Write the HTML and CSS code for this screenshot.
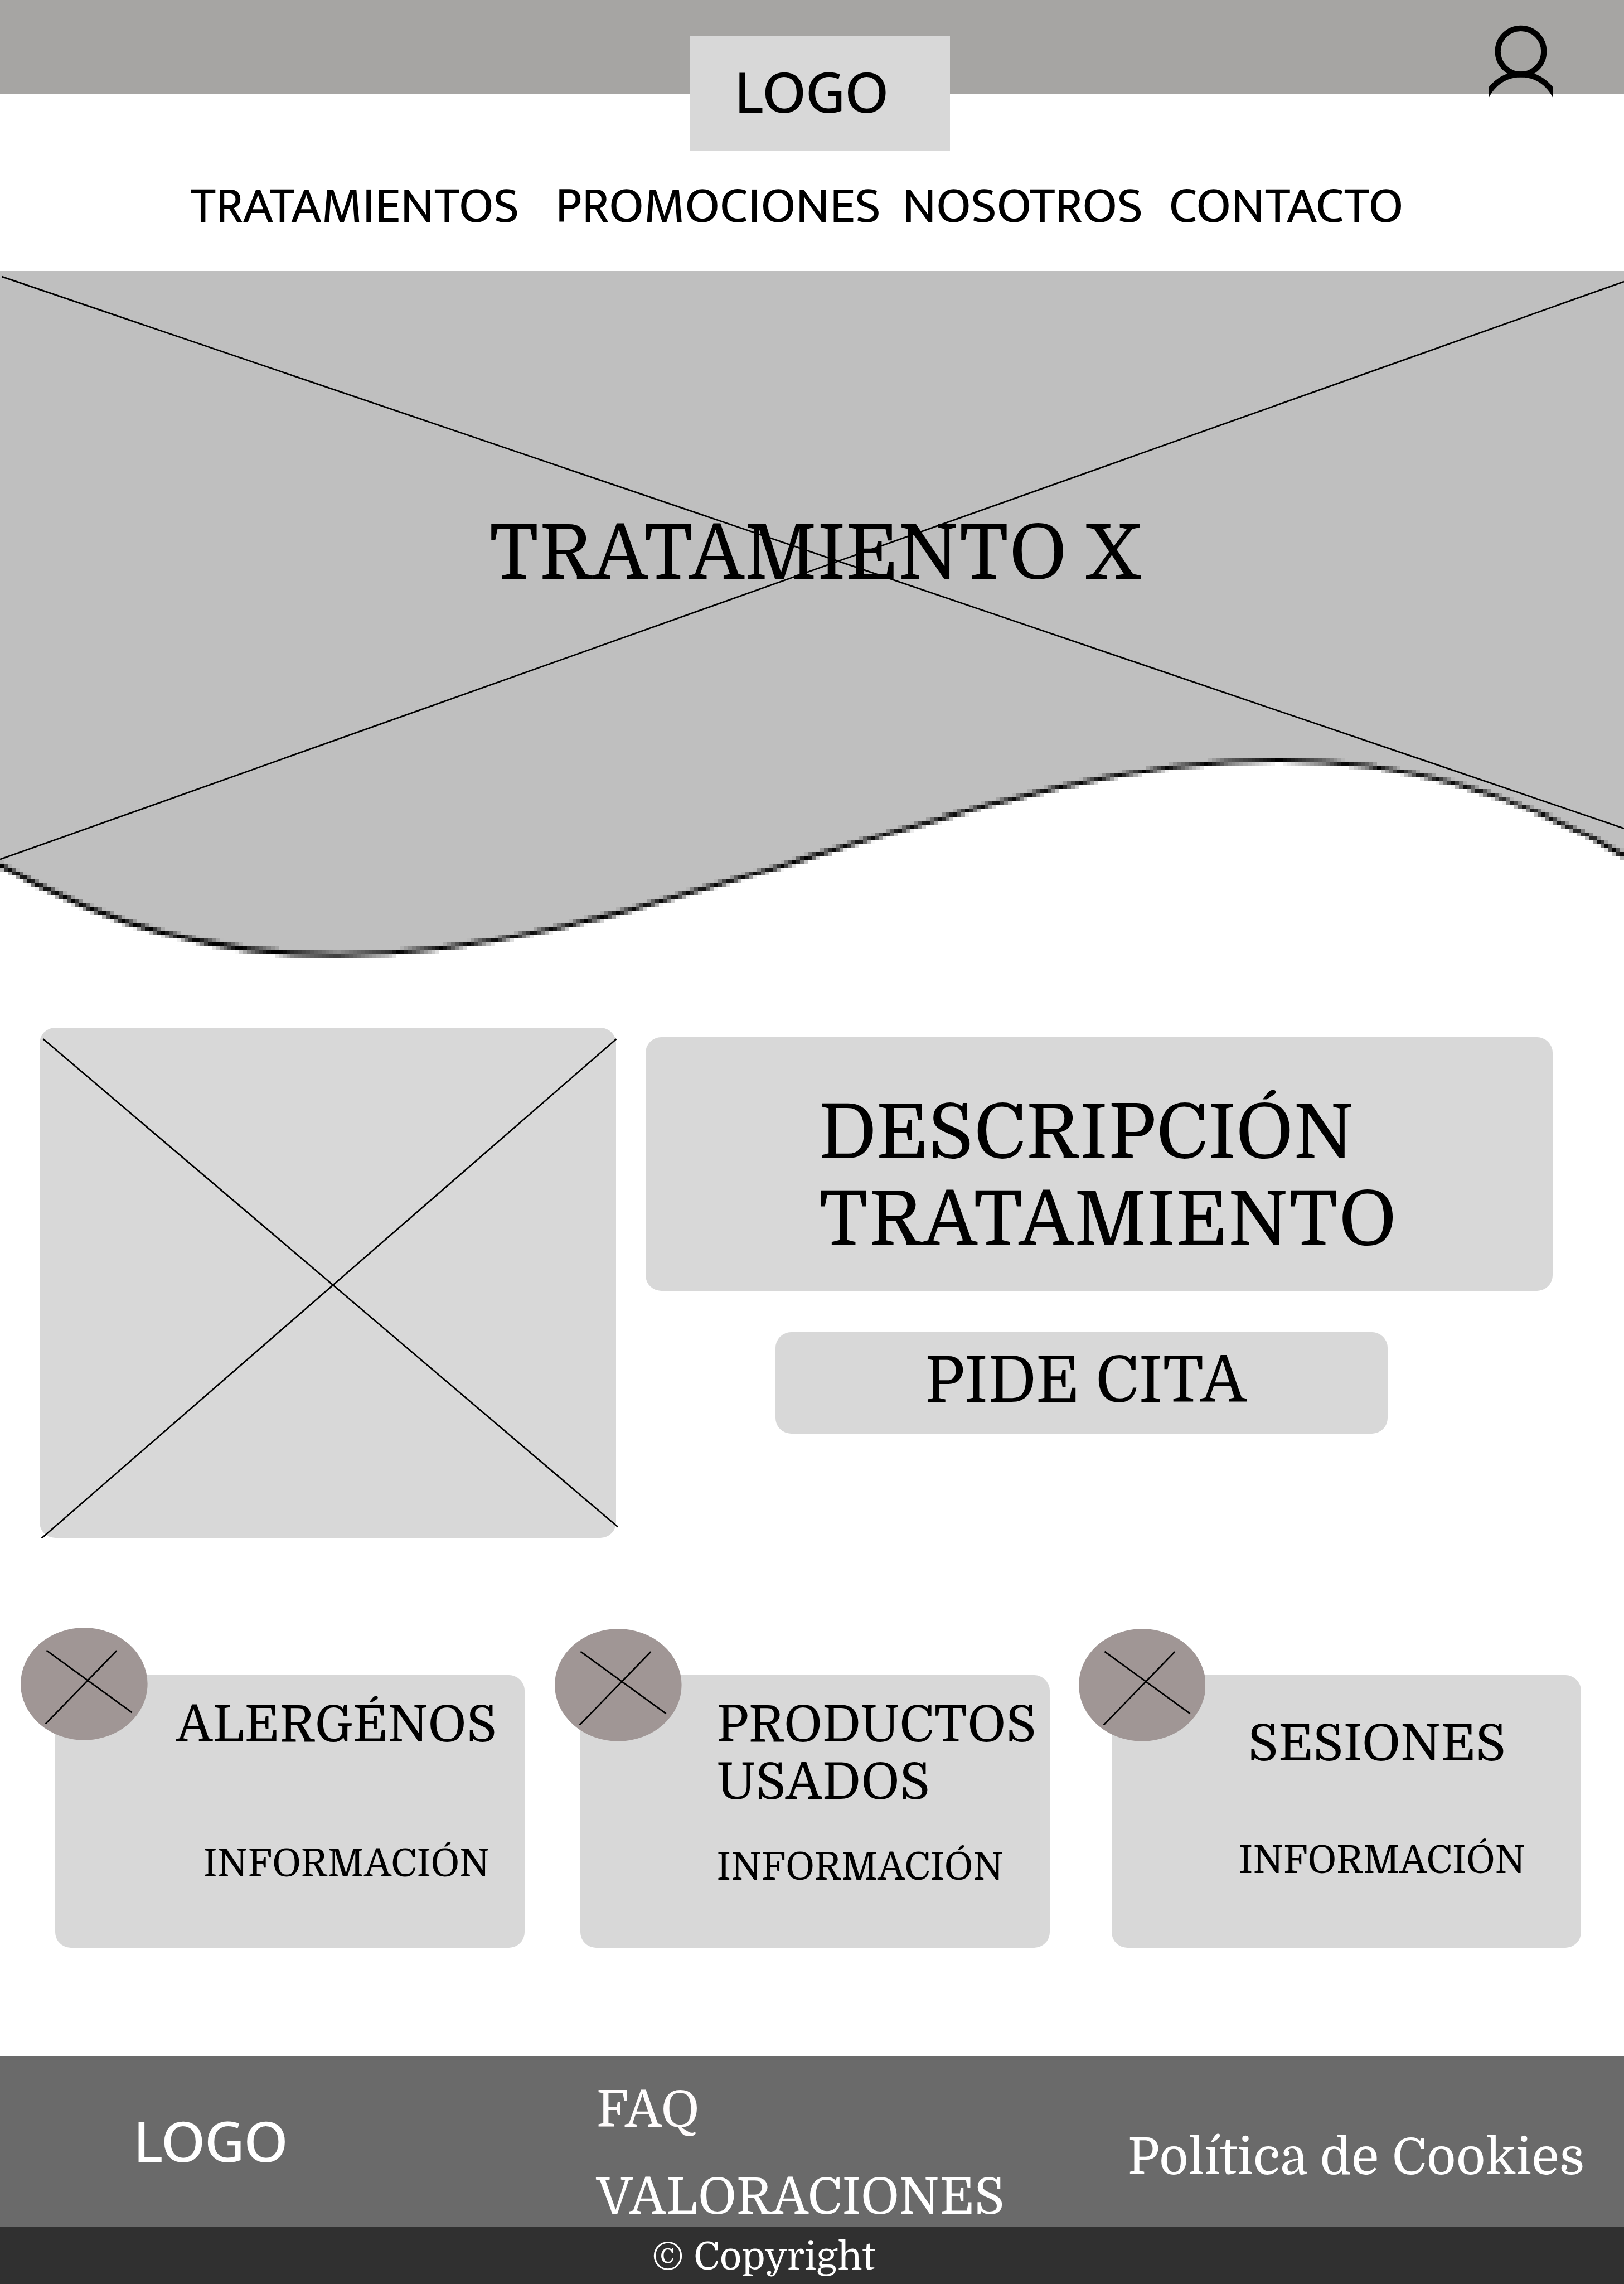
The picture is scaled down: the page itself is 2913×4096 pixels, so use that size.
FILE: index.html
```html
<!DOCTYPE html>
<html lang="es">
<head>
<meta charset="utf-8">
<title>Tratamiento X</title>
<link rel="stylesheet" href="styles.css">
</head>
<body>
<header class="header">
  <div class="topbar">
    <div class="logo-box">LOGO</div>
    <svg class="user-icon" viewBox="0 0 166.7 200" fill="none" stroke="#000" stroke-width="15">
      <circle cx="83.5" cy="75" r="60.5"/>
      <circle cx="83.5" cy="235" r="99.6"/>
    </svg>
  </div>
  <nav class="nav">
    <a>TRATAMIENTOS</a>
    <a class="nav-promos">PROMOCIONES</a>
    <a class="nav-about">NOSOTROS</a>
    <a class="nav-contact">CONTACTO</a>
  </nav>
</header>

<section class="hero">
  <canvas class="hero-wave" width="414" height="176"></canvas>
  <svg class="hero-cross" viewBox="0 712.2 4267 1814" stroke="#000" stroke-width="4">
    <path d="M5 727L4267 2176.5M0 2258L4267 740"/>
  </svg>
  <h1 class="hero-title">TRATAMIENTO X</h1>
</section>

<main>
  <section class="intro">
    <div class="photo">
      <svg class="photo-cross" viewBox="0 0 1514.6 1340.5" stroke="#000" stroke-width="4">
        <path d="M9.5 29.7L1519.4 1311.4M1515.4 29.7L5.4 1341"/>
      </svg>
    </div>
    <div class="intro-side">
      <h2 class="description">DESCRIPCIÓN<br>TRATAMIENTO</h2>
      <a class="booking">PIDE CITA</a>
    </div>
  </section>

  <section class="cards">
    <article class="card card-allergens">
      <svg class="badge" viewBox="0 0 333.4 295.4"><ellipse cx="166.7" cy="147.7" rx="166.7" ry="147.7"/><path d="M68 59.8L292.5 222.9M252.3 60.4L65.3 252.8"/></svg>
      <h3>ALERGÉNOS</h3>
      <p>INFORMACIÓN</p>
    </article>
    <article class="card card-products">
      <svg class="badge" viewBox="0 0 333.4 295.4"><ellipse cx="166.7" cy="147.7" rx="166.7" ry="147.7"/><path d="M68 59.8L292.5 222.9M252.3 60.4L65.3 252.8"/></svg>
      <h3>PRODUCTOS<br>USADOS</h3>
      <p>INFORMACIÓN</p>
    </article>
    <article class="card card-sessions">
      <svg class="badge" viewBox="0 0 333.4 295.4"><ellipse cx="166.7" cy="147.7" rx="166.7" ry="147.7"/><path d="M68 59.8L292.5 222.9M252.3 60.4L65.3 252.8"/></svg>
      <h3>SESIONES</h3>
      <p>INFORMACIÓN</p>
    </article>
  </section>
</main>

<footer>
  <div class="footer-main">
    <div class="footer-logo">LOGO</div>
    <div class="footer-links">
      <a class="faq">FAQ</a>
      <a>VALORACIONES</a>
    </div>
    <a class="cookies">Política de Cookies</a>
  </div>
  <div class="copyright">© Copyright</div>
</footer>
<script src="wave.js"></script>
</body>
</html>
```

FILE: styles.css
```css
* { box-sizing: border-box; }

body {
  margin: 0;
  width: 2913px;
  height: 4096px;
  overflow: hidden;
  background: #fff;
  color: #000;
  font-family: "Domine", "Noto Serif", "DejaVu Serif Condensed", serif;
  line-height: 1.14;
  white-space: nowrap;
}

h1, h2, h3, p { margin: 0; font-weight: 400; }
svg, canvas { display: block; }

/* Header */
.header { height: 486.2px; }

.topbar {
  display: flex;
  align-items: flex-start;
  height: 167.7px;
  padding-left: 1237.3px;
  background: #a6a5a3;
}

.logo-box {
  width: 466.3px;
  height: 204.7px;
  margin-top: 65.2px;
  padding-left: 80px;
  background: #d8d8d8;
  font: 113.8px/206px "Mukta", "Noto Sans", sans-serif;
}

.user-icon {
  width: 113.8px;
  height: 136.5px;
  margin: 41px 0 0 967.6px;
}

.nav {
  display: flex;
  padding: 153.5px 0 0 341.5px;
  font: 91px/100px "Mukta", "Noto Sans", sans-serif;
}
.nav-promos { margin-left: 64.6px; }
.nav-about { margin-left: 38.4px; }
.nav-contact { margin-left: 47px; }

/* Hero */
.hero {
  display: grid;
  height: 1238.4px;
}
.hero > * { grid-area: 1 / 1; }
.hero-wave {
  width: 2913px;
  height: 1238.4px;
  image-rendering: pixelated;
}
.hero-cross { width: 2913px; height: 1238.4px; }
.hero-title {
  padding: 429.8px 0 0 877px;
  font-size: 136.5px;
}

/* Photo and description */
.intro {
  display: flex;
  gap: 53.4px;
  padding: 118.7px 0 0 70.6px;
}
.photo {
  width: 1034px;
  height: 915.1px;
  border-radius: 28px;
  background: #d8d8d8;
}
.photo-cross { width: 1034px; height: 915.1px; overflow: visible; }
.intro-side { padding-top: 16.8px; }
.description {
  width: 1626.7px;
  height: 455.2px;
  padding: 94px 0 0 310.3px;
  border-radius: 28px;
  background: #d8d8d8;
  font-size: 136.5px;
  line-height: 156px;
}
.booking {
  display: block;
  width: 1098.3px;
  height: 181.7px;
  margin: 74.1px 0 0 232.9px;
  padding: 22.7px 0 0 267.5px;
  border-radius: 28px;
  background: #d8d8d8;
  font-size: 113.8px;
}

/* Cards */
.cards {
  display: flex;
  padding: 245.5px 0 193.9px 99.4px;
}
.card {
  position: relative;
  width: 842px;
  height: 488.8px;
  border-radius: 28px;
  background: #d8d8d8;
}
.card h3 { font-size: 91px; }
.card p { font-size: 68.27px; }

.badge {
  position: absolute;
  width: 227.6px;
  height: 201.7px;
  fill: #a09695;
  stroke: #000;
  stroke-width: 4;
}
.badge ellipse { stroke: none; }

.card-allergens .badge { left: -62.3px; top: -85.3px; }
.card-allergens h3 { padding: 38px 0 0 216.3px; }
.card-allergens p { padding: 158.5px 0 0 264.9px; }

.card-products { margin-left: 99.9px; }
.card-products .badge { left: -46px; top: -82.5px; }
.card-products h3 { padding: 38.6px 0 0 244.2px; line-height: 102.5px; }
.card-products p { padding: 62.9px 0 0 244.2px; }

.card-sessions { margin-left: 110.7px; }
.card-sessions .badge { left: -59.4px; top: -82.5px; }
.card-sessions h3 { padding: 72.1px 0 0 244.5px; }
.card-sessions p { padding: 118.7px 0 0 227.8px; }

/* Footer */
.footer-main {
  display: flex;
  height: 307.2px;
  padding-left: 239.4px;
  background: #6a6a6a;
  color: #fff;
  font-size: 91px;
}
.footer-logo {
  padding-top: 106.6px;
  font: 113.8px/100px "Mukta", "Noto Sans", sans-serif;
}
.footer-links {
  display: flex;
  flex-direction: column;
  gap: 52.6px;
  margin-left: 553.6px;
  padding-top: 46.4px;
}
.faq { color: #fffcfc; }
.cookies { margin-left: 220.4px; padding-top: 131.8px; }
.copyright {
  height: 102.2px;
  padding: 15.4px 0 0 1169.3px;
  background: #303030;
  color: #fff;
  font-size: 68.27px;
}
```

FILE: wave.js
```js
// Draws the hero background with its wavy lower edge on a coarse pixel grid.
const canvas = document.querySelector('.hero-wave');
const ctx = canvas.getContext('2d');
const unit = canvas.width / 4267;
ctx.scale(unit, unit);
ctx.translate(0, -712.2);

const wave =
  '2271C300 2443 577 2508.5 888 2508.5C1288 2508.5 1700 2380 2125 2252' +
  'C2550 2124 2961 1995.5 3360 1995.5C3682 1995.5 3962 2070 4267 2247';

ctx.fillStyle = '#bfbfbf';
ctx.fill(new Path2D('M0 712.2V' + wave + 'V712.2Z'));
ctx.lineWidth = 11.5;
ctx.strokeStyle = '#000';
ctx.stroke(new Path2D('M0 ' + wave));
```
